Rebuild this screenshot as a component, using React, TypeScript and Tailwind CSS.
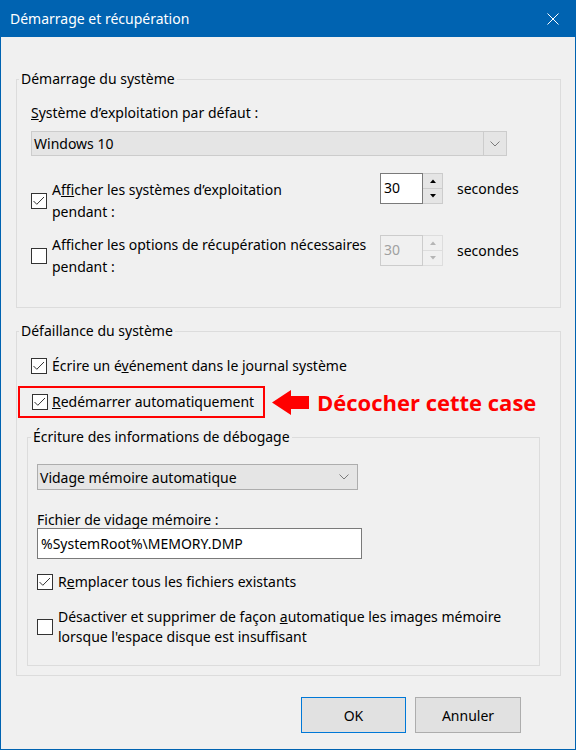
import React from "react";

function Box({ checked }: { checked?: boolean }) {
  return (
    <span className="w-4 h-4 shrink-0 border border-[#333333] bg-white flex items-center justify-center">
      {checked && (
        <svg width="14" height="14" viewBox="0 0 14 14">
          <path d="M1.5 7 L4.8 10.3 L12 3" fill="none" stroke="#333333" strokeWidth="1" />
        </svg>
      )}
    </span>
  );
}

function Chevron() {
  return (
    <svg width="10" height="6" viewBox="0 0 10 6">
      <path d="M0.5 0.5 L5 5 L9.5 0.5" fill="none" stroke="#7a7a7a" strokeWidth="1" />
    </svg>
  );
}

function Spin({ disabled }: { disabled?: boolean }) {
  return (
    <div className="flex w-[63px] h-[31px] shrink-0">
      <div
        className={
          disabled
            ? "w-[43px] border border-[#cccccc] bg-[#f0f0f0] text-[#a0a0a0] pl-[3px] pt-[4px] leading-5"
            : "w-[43px] border border-[#7a7a7a] bg-white text-black pl-[3px] pt-[4px] leading-5"
        }
      >
        30
      </div>
      <div
        className={
          disabled
            ? "w-[20px] flex flex-col border border-l-0 border-[#dddddd] bg-[#f0f0f0]"
            : "w-[20px] flex flex-col border border-l-0 border-[#cccccc] bg-[#e5e5e5]"
        }
      >
        <div
          className={
            disabled
              ? "flex-1 flex items-center justify-center border-b border-[#dddddd]"
              : "flex-1 flex items-center justify-center border-b border-[#cccccc]"
          }
        >
          <svg width="6" height="4" viewBox="0 0 6 4">
            <path d="M0 4 L3 0.5 L6 4 Z" fill={disabled ? "#b5b5b5" : "#000000"} />
          </svg>
        </div>
        <div className="flex-1 flex items-center justify-center">
          <svg width="6" height="4" viewBox="0 0 6 4">
            <path d="M0 0 L3 3.5 L6 0 Z" fill={disabled ? "#b5b5b5" : "#000000"} />
          </svg>
        </div>
      </div>
    </div>
  );
}

export default function App() {
  return (
    <div className="w-[576px] h-[750px] bg-[#f0f0f0] border-x border-b border-[#0063b1] flex flex-col font-['Noto_Sans',sans-serif] text-[14px] text-black">
      {/* Title bar */}
      <div className="h-[37px] shrink-0 bg-[#0063b1] flex items-center justify-between pl-[9px] pr-[16px] text-white text-[14px]">
        <span>Démarrage et récupération</span>
        <svg width="12" height="12" viewBox="0 0 12 12">
          <path d="M0.5 0.5 L11.5 11.5 M11.5 0.5 L0.5 11.5" stroke="#ffffff" strokeWidth="1" />
        </svg>
      </div>

      {/* Group 1 */}
      <fieldset className="mt-[32px] ml-[15px] w-[545px] h-[239px] border border-[#dcdcdc] shrink-0">
        <legend className="ml-[2px] px-[2px] leading-5">Démarrage du système</legend>
        <div className="pl-[14px]">
          <div className="mt-[14px] leading-5">
            <span className="underline">S</span>ystème d’exploitation par défaut :
          </div>
          <div className="mt-[8px] w-[476px] h-[25px] border border-[#cccccc] bg-[#e5e5e5] flex">
            <div className="flex-1 border-r border-[#cccccc] pl-[2px] leading-[23px]">Windows 10</div>
            <div className="w-[22px] flex items-center justify-center">
              <Chevron />
            </div>
          </div>

          <div className="mt-[17px] flex items-start">
            <div className="mt-[6px] w-[349px] flex items-center gap-[5px] leading-[22px]">
              <Box checked />
              <span>
                A<span className="underline">f</span>ficher les systèmes d’exploitation
                <br />
                pendant :
              </span>
            </div>
            <Spin />
            <div className="ml-[14px] mt-[6px] leading-5">secondes</div>
          </div>

          <div className="mt-[11px] flex items-start">
            <div className="w-[349px] flex items-center gap-[5px] leading-[22px]">
              <Box />
              <span>
                Aff<span className="underline">i</span>cher les options de récupération nécessaires
                <br />
                pendant :
              </span>
            </div>
            <div className="mt-[1px]">
              <Spin disabled />
            </div>
            <div className="ml-[14px] mt-[7px] leading-5">secondes</div>
          </div>
        </div>
      </fieldset>

      {/* Group 2 */}
      <fieldset className="mt-[13px] ml-[15px] w-[545px] h-[355px] border border-[#dcdcdc] shrink-0">
        <legend className="ml-[2px] px-[2px] leading-5">Défaillance du système</legend>
        <div className="mt-[15px] pl-[14px] flex items-center gap-[5px] leading-5">
          <Box checked />
          <span>
            Écrire un é<span className="underline">v</span>énement dans le journal système
          </span>
        </div>

        <div className="mt-[10px] flex items-center">
          <div className="ml-[1px] w-[247px] h-[32px] border-2 border-[#ff0000] flex items-center gap-[4px] pl-[12px] leading-5">
            <Box checked />
            <span>
              <span className="underline">R</span>edémarrer automatiquement
            </span>
          </div>
          <svg className="ml-[7px]" width="37" height="25" viewBox="0 0 37 25">
            <path d="M0 12.5 L19 0 L19 6 L37 6 L37 19 L19 19 L19 25 Z" fill="#ff0000" />
          </svg>
          <span className="ml-[8px] text-[#ff0000] font-bold text-[22px] leading-6 font-['Open_Sans',sans-serif]">
            Décocher cette case
          </span>
        </div>

        {/* Inner group */}
        <fieldset className="mt-[9px] ml-[10px] w-[513px] h-[239px] border border-[#dcdcdc]">
          <legend className="ml-[3px] px-[2px] leading-5">Écriture des informations de débogage</legend>
          <div className="pl-[9px]">
            <div className="mt-[17px] w-[321px] h-[26px] border border-[#adadad] bg-[#e5e5e5] flex items-center justify-between pl-[2px] pr-[8px]">
              <span>Vidage mémoire automatique</span>
              <Chevron />
            </div>
            <div className="mt-[22px] leading-4">Fichier de vidage mémoire :</div>
            <div className="w-[325px] h-[31px] border border-[#7a7a7a] bg-white flex items-center pl-[3px]">
              %SystemRoot%\MEMORY.DMP
            </div>
            <div className="mt-[13px] flex items-center gap-[5px] leading-5">
              <Box checked />
              <span>
                R<span className="underline">e</span>mplacer tous les fichiers existants
              </span>
            </div>
            <div className="mt-[15px] flex items-center gap-[5px] leading-5">
              <Box />
              <span>
                Désactiver et supprimer de façon <span className="underline">a</span>utomatique les images mémoire
                <br />
                lorsque l'espace disque est insuffisant
              </span>
            </div>
          </div>
        </fieldset>
      </fieldset>

      {/* Buttons */}
      <div className="mt-[21px] flex justify-end gap-[9px] pr-[54px]">
        <button className="w-[105px] h-[36px] border border-[#0078d7] bg-[#e1e1e1]">OK</button>
        <button className="w-[106px] h-[36px] border border-[#adadad] bg-[#e1e1e1]">Annuler</button>
      </div>
    </div>
  );
}
